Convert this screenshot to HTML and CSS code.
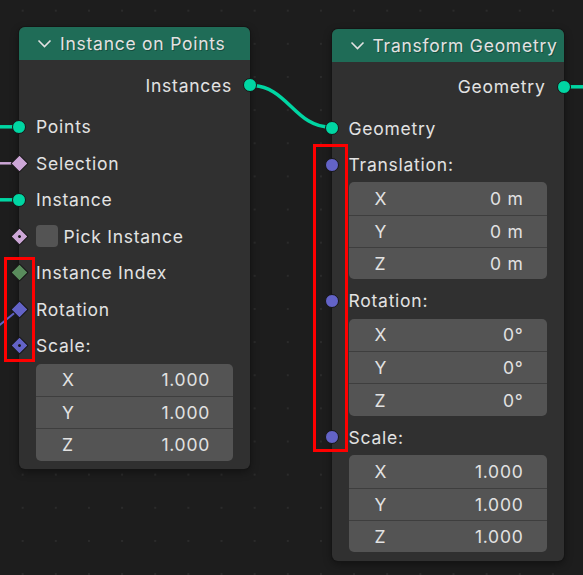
FILE: index.html
```html
<!DOCTYPE html>
<html lang="en">

<head>
  <meta charset="UTF-8">
  <meta name="viewport" content="width=device-width, initial-scale=1.0">
  <title>Geometry Nodes</title>
  <link rel="stylesheet" href="styles.css">
</head>

<body>
  <div class="editor">
    <!-- links between sockets -->
    <svg class="wires" width="583" height="575" viewBox="0 0 583 575">
      <path d="M0 126.8 H19" stroke="#00d6a3" stroke-width="3.5" fill="none" />
      <path d="M0 163.3 H19" stroke="#cca6d6" stroke-width="2.5" fill="none" />
      <path d="M0 199.8 H19" stroke="#00d6a3" stroke-width="3.5" fill="none" />
      <path d="M-4 328 L19 309.3" stroke="#6363c7" stroke-width="2" fill="none" />
      <path d="M250 85.3 C288 85.3 294 127.3 331.5 127.3" stroke="#00d6a3" stroke-width="3.5" fill="none" />
      <path d="M563.5 86.8 H583" stroke="#00d6a3" stroke-width="3.5" fill="none" />
    </svg>

    <div class="node node-a">
      <div class="node-header">
        <svg class="chev" width="15" height="9" viewBox="0 0 15 9"><polyline points="1.5,1.5 7.5,7.5 13.5,1.5" /></svg>
        Instance on Points
      </div>
      <div class="node-body">
        <div class="row out">Instances<span class="socket geo"></span></div>
        <div class="row"><span class="socket geo"></span>Points</div>
        <div class="row"><span class="socket diamond bool"></span>Selection</div>
        <div class="row"><span class="socket geo"></span>Instance</div>
        <div class="row"><span class="socket diamond bool dot"></span><span class="check"></span>Pick Instance</div>
        <div class="row"><span class="socket diamond int"></span>Instance Index</div>
        <div class="row"><span class="socket diamond vec"></span>Rotation</div>
        <div class="row"><span class="socket diamond vec dot"></span>Scale:</div>
        <div class="vector">
          <div class="vrow"><span>X</span><span>1.000</span></div>
          <div class="vrow"><span>Y</span><span>1.000</span></div>
          <div class="vrow"><span>Z</span><span>1.000</span></div>
        </div>
      </div>
    </div>

    <div class="node node-b">
      <div class="node-header">
        <svg class="chev" width="15" height="9" viewBox="0 0 15 9"><polyline points="1.5,1.5 7.5,7.5 13.5,1.5" /></svg>
        Transform Geometry
      </div>
      <div class="node-body">
        <div class="row out">Geometry<span class="socket geo"></span></div>
        <div class="row"><span class="socket geo"></span>Geometry</div>
        <div class="row"><span class="socket vec"></span>Translation:</div>
        <div class="vector">
          <div class="vrow"><span>X</span><span>0 m</span></div>
          <div class="vrow"><span>Y</span><span>0 m</span></div>
          <div class="vrow"><span>Z</span><span>0 m</span></div>
        </div>
        <div class="row"><span class="socket vec"></span>Rotation:</div>
        <div class="vector">
          <div class="vrow"><span>X</span><span>0°</span></div>
          <div class="vrow"><span>Y</span><span>0°</span></div>
          <div class="vrow"><span>Z</span><span>0°</span></div>
        </div>
        <div class="row"><span class="socket vec"></span>Scale:</div>
        <div class="vector">
          <div class="vrow"><span>X</span><span>1.000</span></div>
          <div class="vrow"><span>Y</span><span>1.000</span></div>
          <div class="vrow"><span>Z</span><span>1.000</span></div>
        </div>
      </div>
    </div>

    <!-- annotation boxes -->
    <div class="mark mark-a"></div>
    <div class="mark mark-b"></div>
  </div>
</body>

</html>
```

FILE: styles.css
```css
* {
  box-sizing: border-box;
}

body {
  margin: 0;
  background: #1d1d1d;
  font-family: Inter, "Noto Sans", sans-serif;
  font-size: 17.5px;
  letter-spacing: 0.75px;
  color: #e2e2e2;
}

.editor {
  position: relative;
  width: 583px;
  height: 575px;
  overflow: hidden;
  background-color: #1d1d1d;
  background-image: radial-gradient(circle, #2b2b2b 0 1px, transparent 1.5px);
  background-size: 33.15px 33.15px;
  background-position: 6.1px -5.9px;
}

.wires {
  position: absolute;
  left: 0;
  top: 0;
}

.node {
  position: absolute;
  width: 231px;
  background: #303030;
  border-radius: 6px;
  box-shadow: 0 0 0 1px #151515, 0 3px 8px rgba(0, 0, 0, 0.4);
}

.node-a {
  left: 19px;
  top: 27.3px;
}

.node-b {
  left: 331.5px;
  top: 28.5px;
  width: 232px;
}

.node-header {
  height: 33px;
  display: flex;
  align-items: center;
  gap: 8px;
  padding-left: 18px;
  background: #1f6c57;
  border-radius: 6px 6px 0 0;
  white-space: nowrap;
  text-shadow: 1px 1px 0 rgba(0, 0, 0, 0.3);
}

.chev polyline {
  fill: none;
  stroke: #e2e2e2;
  stroke-width: 1.6;
}

.node-body {
  padding: 6.75px 0 8.5px;
}

.row {
  position: relative;
  height: 36.5px;
  display: flex;
  align-items: center;
  padding: 0 17px;
  white-space: nowrap;
}

.row.out {
  justify-content: flex-end;
  padding-right: 18px;
  margin-bottom: 5px;
}

.socket {
  position: absolute;
  left: -7px;
  top: 50%;
  width: 14px;
  height: 14px;
  margin-top: -7px;
  border-radius: 50%;
  border: 1px solid #161616;
}

.row.out .socket {
  left: auto;
  right: -7px;
}

.socket.diamond {
  left: -6.5px;
  width: 13px;
  height: 13px;
  margin-top: -6.5px;
  border-radius: 1px;
  transform: rotate(45deg);
}

.socket.dot::after {
  content: "";
  position: absolute;
  left: 50%;
  top: 50%;
  width: 3.5px;
  height: 3.5px;
  margin: -1.75px 0 0 -1.75px;
  border-radius: 50%;
  background: #1a1a1a;
}

.geo {
  background: #00d6a3;
}

.bool {
  background: #cca6d6;
}

.int {
  background: #598c5c;
}

.vec {
  background: #6363c7;
}

.check {
  width: 22px;
  height: 22px;
  margin-right: 5.5px;
  border-radius: 4px;
  background: #545454;
}

.vector {
  margin: -0.5px 17px 3.5px;
  border-radius: 5px;
  background: #545454;
  overflow: hidden;
}

.vector:last-child {
  margin-bottom: 0;
}

.vrow {
  height: 32.33px;
  display: flex;
  align-items: center;
  justify-content: space-between;
  padding: 0 23px 0 26px;
}

.vrow + .vrow {
  border-top: 1px solid #3e3e3e;
}

.mark {
  position: absolute;
  border: 3px solid #ff0000;
}

.mark-a {
  left: 3.5px;
  top: 257.3px;
  width: 31.4px;
  height: 104.7px;
}

.mark-b {
  left: 313.3px;
  top: 144px;
  width: 34.4px;
  height: 308.3px;
}
```
